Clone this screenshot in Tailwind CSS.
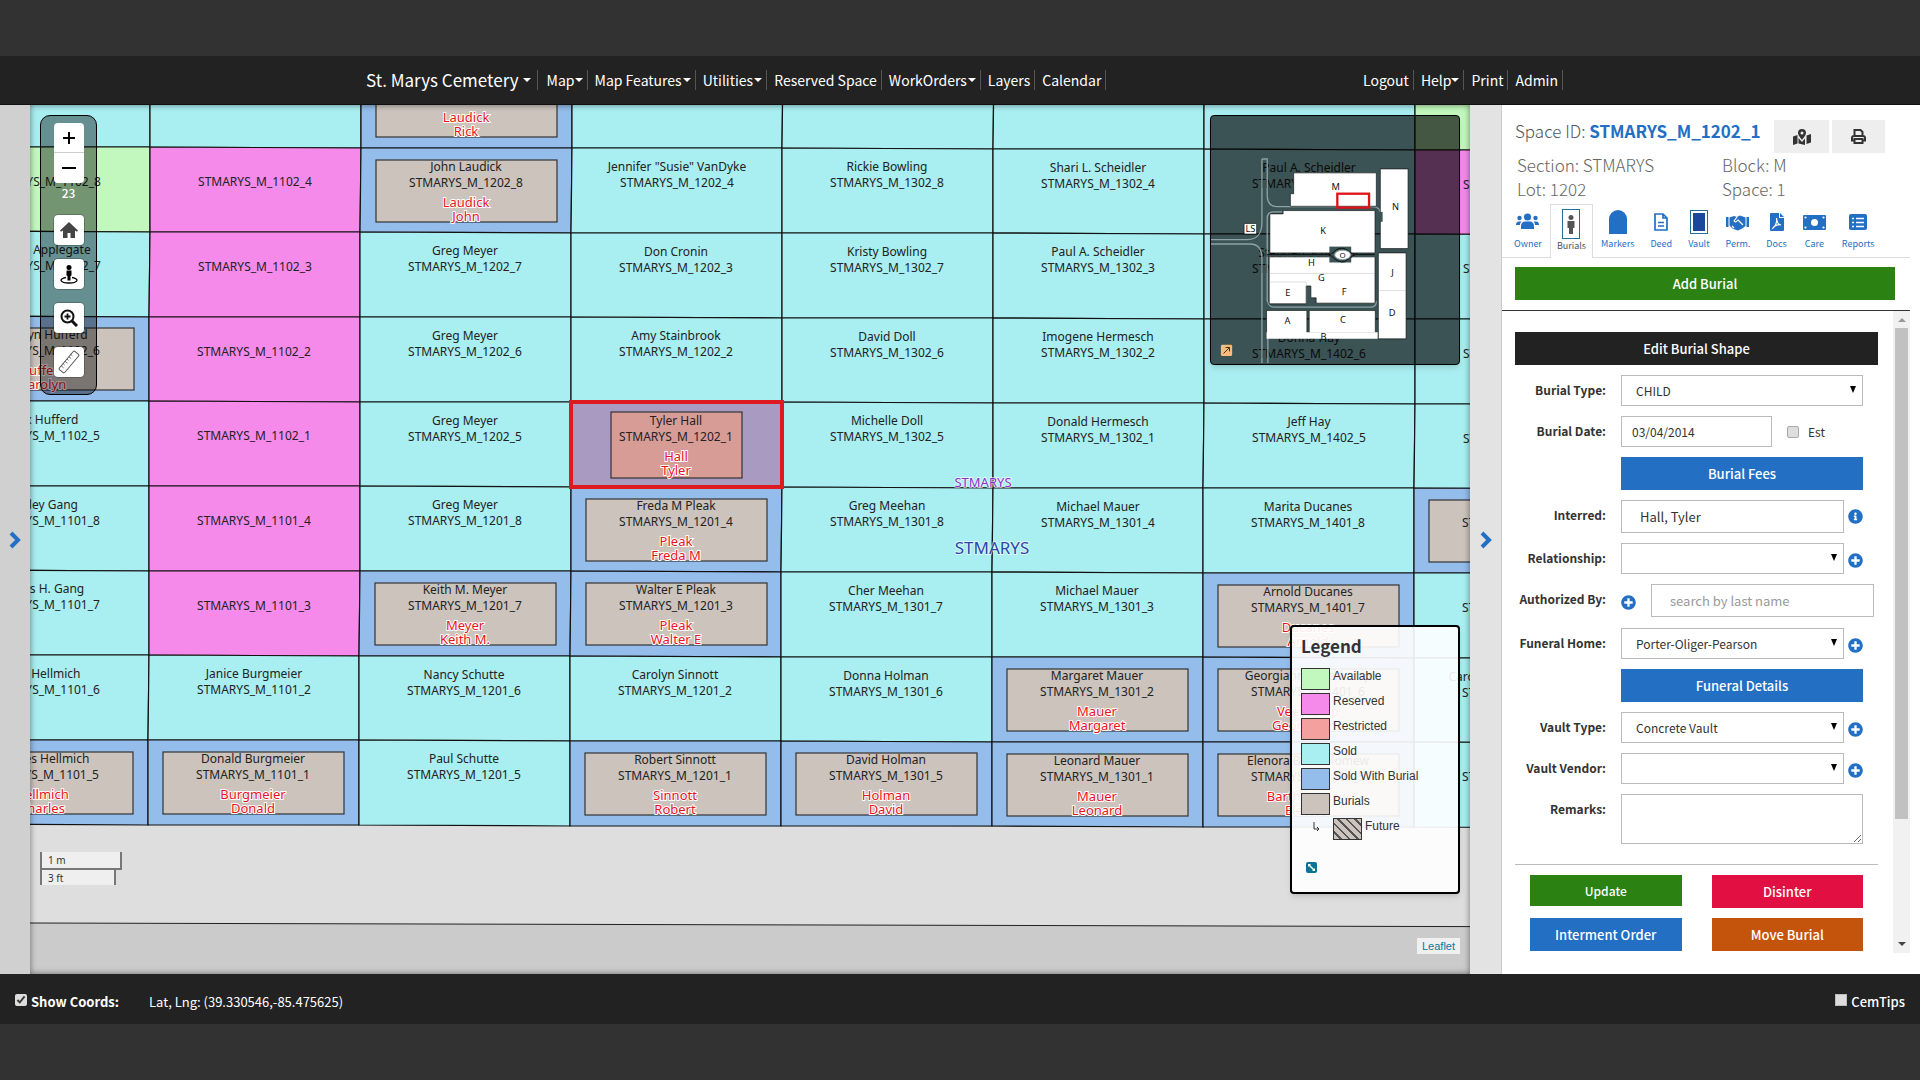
<!DOCTYPE html>
<html lang="en">
<head>
    <meta charset="UTF-8">
    <meta name="viewport" content="width=device-width, initial-scale=1.0">
    <title>St. Marys Cemetery</title>
    <script src="https://cdn.jsdelivr.net/npm/@tailwindcss/browser@4"></script>
</head>
<body class="bg-[#323232] min-h-screen flex flex-col py-14 font-['Noto_Sans_CJK_SC','Noto_Sans',sans-serif] text-[#333]">

<!-- Shared icons -->
<svg class="hidden">
    <symbol id="plus-circle" viewBox="0 0 512 512">
        <path d="M256 8C119 8 8 119 8 256s111 248 248 248 248-111 248-248S393 8 256 8zm144 276c0 7-5 12-12 12h-92v92c0 7-5 12-12 12h-56c-7 0-12-5-12-12v-92h-92c-7 0-12-5-12-12v-56c0-7 5-12 12-12h92v-92c0-7 5-12 12-12h56c7 0 12 5 12 12v92h92c7 0 12 5 12 12v56z"/>
    </symbol>
    <symbol id="info-circle" viewBox="0 0 512 512">
        <path d="M256 8C119 8 8 119 8 256c0 137 111 248 248 248s248-111 248-248C504 119 393 8 256 8zm0 110c23 0 42 19 42 42s-19 42-42 42-42-19-42-42 19-42 42-42zm56 254c0 7-5 12-12 12h-88c-7 0-12-5-12-12v-24c0-7 5-12 12-12h12v-64h-12c-7 0-12-5-12-12v-24c0-7 5-12 12-12h64c7 0 12 5 12 12v100h12c7 0 12 5 12 12v24z"/>
    </symbol>
    <symbol id="chevron" viewBox="0 0 14 18">
        <path d="M3 2l7 7-7 7" fill="none" stroke="currentColor" stroke-width="4"/>
    </symbol>
    <symbol id="caret" viewBox="0 0 8 4">
        <path d="M0 0h8L4 4z"/>
    </symbol>
    <symbol id="arrow" viewBox="0 0 6 7">
        <path d="M0 0h6L3 7z"/>
    </symbol>
</svg>

<header class="h-[49px] bg-[#222] text-white text-[14px] leading-5 flex items-center border-b border-[#111]">
    <nav class="w-full max-w-[1206px] mx-auto flex items-center justify-between pl-[9px]">
        <div class="flex items-center">
            <a href="#" class="flex items-center gap-1 border-r border-[#555] pr-[6px] mr-[9px] text-[17px]">St. Marys Cemetery
                <svg class="w-2 h-1 fill-current"><use href="#caret"/></svg></a>
            <a href="#" class="flex items-center border-r border-[#555] pr-1 mr-[7px]">Map
                <svg class="w-2 h-1 fill-current"><use href="#caret"/></svg></a>
            <a href="#" class="flex items-center gap-px border-r border-[#555] pr-1 mr-[7px]">Map Features
                <svg class="w-2 h-1 fill-current"><use href="#caret"/></svg></a>
            <a href="#" class="flex items-center gap-px border-r border-[#555] pr-1 mr-[7px]">Utilities
                <svg class="w-2 h-1 fill-current"><use href="#caret"/></svg></a>
            <a href="#" class="border-r border-[#555] pr-1 mr-[7px]">Reserved Space</a>
            <a href="#" class="flex items-center gap-px border-r border-[#555] pr-1 mr-[7px]">WorkOrders
                <svg class="w-2 h-1 fill-current"><use href="#caret"/></svg></a>
            <a href="#" class="border-r border-[#555] pr-1 mr-[7px]">Layers</a>
            <a href="#" class="border-r border-[#555] pr-1">Calendar</a>
        </div>
        <div class="flex items-center">
            <a href="#" class="border-r border-[#555] pr-1 mr-[7px]">Logout</a>
            <a href="#" class="flex items-center border-r border-[#555] pr-1 mr-[7px]">Help
                <svg class="w-2 h-1 fill-current"><use href="#caret"/></svg></a>
            <a href="#" class="border-r border-[#555] pr-1 mr-[7px]">Print</a>
            <a href="#" class="border-r border-[#555] pr-1">Admin</a>
        </div>
    </nav>
</header>

<main class="flex-1 flex">
    <button type="button" aria-label="Open left panel" class="w-[30px] shrink-0 bg-[#d0d0d0] flex items-center justify-center text-[#226fc4]">
        <svg class="w-[14px] h-[18px]"><use href="#chevron"/></svg>
    </button>

    <section class="flex-1 relative overflow-hidden bg-[#cbcbcb]">
        <svg id="map" class="absolute inset-0 size-full font-['Noto_Sans',sans-serif] text-[12px]"></svg>
        <div class="absolute inset-0 shadow-[inset_0_0_6px_rgba(0,0,0,0.5)]"></div>

        <!-- Map tools -->
        <div class="absolute left-[10px] top-[10px] w-[57px] h-[280px] rounded-[10px] border border-black bg-black/40 flex flex-col items-center pt-[7px]">
            <button type="button" class="w-[30px] h-[30px] rounded-t bg-white border-b border-[#ccc] flex items-center justify-center" aria-label="Zoom in">
                <svg class="w-3 h-3" viewBox="0 0 12 12" fill="none" stroke="#000" stroke-width="2"><path d="M6 0v12M0 6h12"/></svg>
            </button>
            <button type="button" class="w-[30px] h-[30px] rounded-b bg-white flex items-center justify-center" aria-label="Zoom out">
                <svg class="w-[14px] h-[2px]"><rect width="14" height="2"/></svg>
            </button>
            <span class="text-white font-medium text-[12px] leading-5 mb-3">23</span>
            <div class="flex flex-col gap-[14px]">
                <button type="button" class="size-[30px] rounded bg-white shadow-[0_0_0_1px_rgba(0,0,0,0.2)] flex items-center justify-center" aria-label="Home">
                    <svg class="w-[18px] h-4" viewBox="0 0 18 16" fill="#444"><path d="M9 0l9 8.5-1 1.2L15 8.500V16h-4.500v-5h-3v5H3V8.500L1 9.700 0 8.500z"/></svg>
                </button>
                <button type="button" class="size-[30px] rounded bg-white shadow-[0_0_0_1px_rgba(0,0,0,0.2)] flex items-center justify-center" aria-label="Street view">
                    <svg class="w-5 h-[19px]" viewBox="0 0 20 19"><circle cx="10" cy="2.5" r="2.5"/><path d="M7.500 5.500h5v5l-1 .5v4.500h-3V11l-1-.5z"/><path d="M7 12.500c-8 1.500-6 5.500 3 5.500s11-4 3-5.500" fill="none" stroke="#000" stroke-width="1.3"/></svg>
                </button>
                <button type="button" class="size-[30px] rounded bg-white shadow-[0_0_0_1px_rgba(0,0,0,0.2)] flex items-center justify-center" aria-label="Zoom to area">
                    <svg class="size-[18px]" viewBox="0 0 18 18" fill="none" stroke="#111"><circle cx="7.5" cy="7.5" r="6" stroke-width="2"/><path d="M7.500 4.500v6M4.500 7.500h6" stroke-width="1.8"/><path d="M12 12l5 5" stroke-width="3"/></svg>
                </button>
                <button type="button" class="size-[30px] rounded bg-white shadow-[0_0_0_1px_rgba(0,0,0,0.2)] flex items-center justify-center" aria-label="Measure">
                    <svg class="size-6" viewBox="0 0 24 24" fill="none" stroke="#555"><g transform="rotate(-50 12 12)"><rect x="0" y="8.5" width="24" height="7" rx="1.5"/><path d="M4 8.500v3M7 8.500v2M10 8.500v3M13 8.500v2M16 8.500v3M19 8.500v2" stroke-width=".8"/></g></svg>
                </button>
            </div>
        </div>

        <!-- Overview map -->
        <div class="absolute right-[10px] top-[10px] size-[250px] rounded border border-black bg-black/65 shadow-md">
            <svg class="size-full font-['Noto_Sans',sans-serif] text-[28px]" viewBox="0 0 750 750">
                <g fill="none" stroke="#8fa3a5" stroke-width="4">
                    <path d="M154 130v190c0 38-14 54-46 54H0M154 130h16v110c0 25 10 34 30 34h290c18 0 24 10 24 30M0 387h118c25 0 36 14 36 44v316M172 747V600"/>
                    <path d="M170 560V310c0-14 6-20 20-20h26M170 550c0 20 6 28 22 28h290c14 0 18-6 18-18"/>
                </g>
                <g fill="#fff" stroke="#111" stroke-width="2">
                    <path d="M250 172h250v101H240v-38h10z"/>
                    <path d="M512 160h84v241h-84z"/>
                    <path d="M178 296h40v-10h278v128H178z"/>
                    <path d="M176 426h320v140H318v-16h-16v-36h-14v54H176z"/>
                    <path d="M506 414h84v260h-84z"/>
                    <path d="M168 588h122v82H168zM297 588h200v68H297z"/>
                    <path d="M168 654h336v20H168z" stroke="none"/>
                </g>
                <path d="M176 476h320M176 502h112v66M506 528h84" fill="none" stroke="#999"/>
                <path d="M358 395h66v48h-66z" fill="#3b5355"/>
                <g stroke="#3b5355" fill="none">
                    <path d="M170 421h190c20 0 20-18 40-18s20 18 32 18h66M170 421h190c20 0 20 18 40 18s20-18 32-18" stroke-width="8"/>
                    <path d="M514 290v30" stroke-width="10"/>
                </g>
                <path d="M170 419h185c15 0 20-19 40-19s25 19 40 19h60M355 421c15 0 20 20 40 20s25-20 40-20" fill="none" stroke="#111" stroke-width="3"/>
                <ellipse cx="398" cy="420" rx="24" ry="14" fill="#fff" stroke="#8fa3a5" stroke-width="3"/>
                <rect x="100" y="325" width="38" height="32" rx="3" fill="#fff" stroke="#111" stroke-width="2"/>
                <rect x="382" y="235" width="96" height="42" fill="none" stroke="#e0121c" stroke-width="7"/>
                <g fill="#111" text-anchor="middle">
                    <text x="377" y="225">M</text>
                    <text x="558" y="285">N</text>
                    <text x="339" y="358">K</text>
                    <text x="119" y="351">LS</text>
                    <text x="304" y="454">H</text>
                    <text x="334" y="498">G</text>
                    <text x="232" y="545">E</text>
                    <text x="403" y="541">F</text>
                    <text x="549" y="484">J</text>
                    <text x="548" y="605">D</text>
                    <text x="231" y="628">A</text>
                    <text x="399" y="627">C</text>
                    <text x="340" y="676">B</text>
                    <text x="398" y="429" class="text-[24px]">O</text>
                </g>
                <rect x="30" y="692" width="34" height="34" rx="4" fill="#fdba7c"/>
                <path d="M38 718l18-18M44 700h12v12" fill="none" stroke="#333" stroke-width="3"/>
            </svg>
        </div>

        <!-- Legend -->
        <div class="absolute right-[10px] top-[520px] w-[170px] h-[269px] rounded border-2 border-black bg-white/90 shadow-md pl-[9px] pt-[9px] font-['Liberation_Sans',sans-serif] text-[12px] leading-4">
            <h2 class="font-['Noto_Sans_CJK_SC',sans-serif] font-bold text-[17px] leading-5 mb-3">Legend</h2>
            <ul class="space-y-[3px]">
                <li class="flex gap-[3px]"><span class="w-[29px] h-[22px] border border-[#333] bg-[#c2f8bd]"></span>Available</li>
                <li class="flex gap-[3px]"><span class="w-[29px] h-[22px] border border-[#333] bg-[#f58aeb]"></span>Reserved</li>
                <li class="flex gap-[3px]"><span class="w-[29px] h-[22px] border border-[#333] bg-[#f3a09e]"></span>Restricted</li>
                <li class="flex gap-[3px]"><span class="w-[29px] h-[22px] border border-[#333] bg-[#a9eef0]"></span>Sold</li>
                <li class="flex gap-[3px]"><span class="w-[29px] h-[22px] border border-[#333] bg-[#94bdec]"></span>Sold With Burial</li>
                <li class="flex gap-[3px]"><span class="w-[29px] h-[22px] border border-[#333] bg-[#cbc3bc]"></span>Burials</li>
                <li class="flex gap-[3px]">
                    <span class="w-[29px] flex justify-center pt-1"><svg class="size-[10px]" viewBox="0 0 10 10" fill="none" stroke="#333"><path d="M3 0v7h5M6 5l2 2-2 2"/></svg></span>
                    <span class="w-[29px] h-[22px] border border-[#333] bg-[repeating-linear-gradient(45deg,#cbc3bc_0_4px,#555_4px_6px)]"></span>Future
                </li>
            </ul>
            <button type="button" class="mt-[22px] ml-[5px] size-[11px] rounded-xs bg-[#0b7397] flex" aria-label="Collapse legend">
                <svg class="size-full" viewBox="0 0 11 11" fill="#fff"><path d="M2 2h3L4 3l4 4 1-1v3H6l1-1-4-4-1 1z"/></svg>
            </button>
        </div>

        <!-- Scale and attribution -->
        <div class="absolute left-[10px] top-[747px] font-['Noto_Sans',sans-serif] text-[10px] leading-4">
            <div class="w-[82px] border-2 border-t-0 border-[#777] bg-white/50 px-[6px]">1 m</div>
            <div class="w-[76px] h-[15px] border-x-2 border-[#777] bg-white/50 px-[6px]">3 ft</div>
        </div>
        <a href="#" class="absolute right-[10px] bottom-5 bg-white/70 px-[5px] font-['Liberation_Sans',sans-serif] text-[11px] leading-4 text-[#0078a8]">Leaflet</a>
    </section>

    <button type="button" aria-label="Close right panel" class="w-8 shrink-0 bg-[#e3e3e3] border-r border-[#ccc] flex items-center justify-center text-[#226fc4]">
        <svg class="w-[14px] h-[18px]"><use href="#chevron"/></svg>
    </button>

    <aside class="w-[418px] shrink-0 bg-white flex flex-col">
        <div class="flex justify-between pl-[13px] pr-[35px] pt-[15px]">
            <h1 class="text-[17px] leading-[22px] font-light text-[#555]">Space ID: <b class="font-bold text-[#226fc4]">STMARYS_M_1202_1</b></h1>
            <div class="flex gap-[3px]">
                <button type="button" class="w-[55px] h-[33px] bg-[#eee] flex items-center justify-center" aria-label="Show on map">
                    <svg class="w-[18px] h-4" viewBox="0 0 18 16" fill="#333"><path d="M9 0a4 4 0 0 0-4 4c0 2 3 5.500 4 7 1-1.500 4-5 4-7a4 4 0 0 0-4-4zm0 5.500A1.500 1.500 0 1 1 9 2.500a1.500 1.500 0 0 1 0 3zM0 7.500L4.500 6v8.500L0 16zM5.500 9l3.500 4 3-3.500V16l-6.500-1.500zM13.500 6.500L18 5v8.500L13.500 15z"/></svg>
                </button>
                <button type="button" class="w-[53px] h-[33px] bg-[#eee] flex items-center justify-center" aria-label="Print">
                    <svg class="size-[15px]" viewBox="0 0 15 15" fill="none" stroke="#333" stroke-width="2"><path d="M3.500 7V1h6l2 2v4M3.500 11.500H1V9a2 2 0 0 1 2-2h9a2 2 0 0 1 2 2v2.500h-2.500M3.500 10h8v4h-8z"/></svg>
                </button>
            </div>
        </div>
        <div class="grid grid-cols-[205px_1fr] pl-[15px] text-[17px] leading-6 font-light text-[#666]">
            <span>Section: STMARYS</span><span>Block: M</span>
            <span>Lot: 1202</span><span>Space: 1</span>
        </div>

        <nav class="flex mt-[3px] mr-[10px] pl-1 h-[54px] border-b border-[#ddd] text-[9px] leading-2 text-[#226fc4]">
            <a href="#" class="flex flex-col items-center px-2">
                <svg class="w-[23px] h-9" viewBox="0 0 23 36" fill="currentColor"><circle cx="11.5" cy="13" r="3.6"/><path d="M5 25v-3c0-3 2-4.500 4-4.500h5c2 0 4 1.500 4 4.500v3z"/><circle cx="3.5" cy="14" r="2.2"/><circle cx="19.5" cy="14" r="2.2"/><path d="M0 21c0-2 1-3.500 3-3.500h2.500C4 19 4 20 4 21zM23 21c0-2-1-3.500-3-3.500h-2.500C19 19 19 20 19 21z"/></svg>Owner</a>
            <a href="#" class="flex flex-col items-center px-[6px] h-[54px] border border-b-0 border-[#ddd] bg-white text-[#555] pt-1 leading-[14px]">
                <svg class="w-[18px] h-[30px]" viewBox="0 0 18 30"><rect x=".5" y=".5" width="17" height="29" fill="none" stroke="#226f9f"/><circle cx="9" cy="8.5" r="2.5" fill="#555"/><path d="M5.500 12h7v7H11v6H7v-6H5.500z" fill="#555"/></svg>Burials</a>
            <a href="#" class="flex flex-col items-center px-2">
                <svg class="w-[18px] h-9" viewBox="0 0 18 36" fill="currentColor"><path d="M0 30V15a9 9 0 0 1 18 0v15z"/></svg>Markers</a>
            <a href="#" class="flex flex-col items-center px-2">
                <svg class="w-[14px] h-9" viewBox="0 0 14 36" fill="none" stroke="currentColor" stroke-width="2"><path d="M1 10h8l4 4v12H1zM9 10v4h4M4 18.500h6M4 22h6" stroke-width="1.7"/></svg>Deed</a>
            <a href="#" class="flex flex-col items-center px-2">
                <svg class="w-[18px] h-9" viewBox="0 0 18 36"><rect x=".5" y="6.5" width="17" height="23" fill="none" stroke="#226f9f"/><rect x="3" y="9" width="12" height="18" fill="#1b479d"/></svg>Vault</a>
            <a href="#" class="flex flex-col items-center px-2">
                <svg class="w-[23px] h-9" viewBox="0 0 23 36" fill="currentColor"><path d="M0 13h2.500v10H0zM20.500 13H23v10h-2.500z"/><path d="M3.500 13.500L8 12l3 1 3-1.500 5.500 2V22l-4 3-4 1.500-5-2-3-3z"/><path d="M11 13l-3 4c1 1.500 2.500 1 4-1l5 5M6 22l2 2" fill="none" stroke="#fff" stroke-width="1.2"/></svg>Perm.</a>
            <a href="#" class="flex flex-col items-center px-2">
                <svg class="w-[14px] h-9" viewBox="0 0 14 36"><path d="M0 10q0-1 1-1h8v5h5v12q0 1-1 1H1q-1 0-1-1z" fill="currentColor"/><path d="M10 9l4 4h-4z" fill="currentColor"/><path d="M6.500 14c1 5-2 9-3.500 10 1-2 5-4 8-3-2 0-4-2-4.500-7z" fill="none" stroke="#fff" stroke-width="1.2"/></svg>Docs</a>
            <a href="#" class="flex flex-col items-center px-2">
                <svg class="w-[23px] h-9" viewBox="0 0 23 36"><rect y="11" width="23" height="15" rx="1" fill="currentColor"/><circle cx="11.5" cy="18.5" r="3.5" fill="#fff"/><g fill="#fff"><circle cx="2.5" cy="13.5" r="1.1"/><circle cx="20.5" cy="13.5" r="1.1"/><circle cx="2.5" cy="23.5" r="1.1"/><circle cx="20.5" cy="23.5" r="1.1"/></g></svg>Care</a>
            <a href="#" class="flex flex-col items-center px-2">
                <svg class="w-[18px] h-9" viewBox="0 0 18 36"><rect y="10" width="18" height="16" rx="2" fill="currentColor"/><path d="M3 14.500h2M7 14.500h8M3 18.500h2M7 18.500h8M3 22.500h2M7 22.500h8" stroke="#fff" stroke-width="1.7"/></svg>Reports</a>
        </nav>

        <div class="pl-[13px] pr-[25px] pt-[9px] pb-[10px]">
            <button type="button" class="w-full h-[33px] bg-[#2b8212] text-white font-medium text-[13px]">Add Burial</button>
        </div>

        <div class="flex mr-[10px] border-t border-[#333] h-[643px]">
            <form class="flex-1 pl-[13px] pr-[15px] pt-[21px] text-[13px]">
                <h2 class="h-[33px] bg-[#222] text-white font-medium text-[13px] leading-[33px] text-center">Edit Burial Shape</h2>
                <div class="grid grid-cols-[91px_1fr] gap-x-[15px] gap-y-[10px] pt-[10px] pr-[15px]">
                    <label for="type" class="text-right font-bold text-[12px] leading-[30px]">Burial Type:</label>
                    <div class="relative">
                        <select id="type" class="appearance-none block w-full h-[31px] border border-[#bbb] pl-[14px] text-[12px]"><option>CHILD</option></select>
                        <svg class="absolute right-[7px] top-[11px] w-[6px] h-[7px] pointer-events-none"><use href="#arrow"/></svg>
                    </div>

                    <label for="date" class="text-right font-bold text-[12px] leading-[30px]">Burial Date:</label>
                    <div class="flex items-center">
                        <input id="date" type="text" value="03/04/2014" class="w-[151px] h-[31px] border border-[#bbb] px-[10px] text-[12px]">
                        <input id="est" type="checkbox" class="appearance-none size-3 rounded-xs border border-[#aaa] bg-[#ddd] ml-[15px] mr-[9px]">
                        <label for="est" class="text-[12px]">Est</label>
                    </div>

                    <button type="button" class="col-start-2 h-[33px] bg-[#226fc4] text-white font-medium text-[13px]">Burial Fees</button>

                    <label for="interred" class="text-right font-bold text-[12px] leading-[30px]">Interred:</label>
                    <div class="flex items-center justify-between">
                        <input id="interred" type="text" value="Hall, Tyler" class="w-[223px] h-[33px] border border-[#bbb] px-[18px] text-[13px]">
                        <button type="button" aria-label="Interred details"><svg class="size-[15px] fill-[#226fc4]"><use href="#info-circle"/></svg></button>
                    </div>

                    <label for="relationship" class="text-right font-bold text-[12px] leading-[30px]">Relationship:</label>
                    <div class="flex items-center justify-between">
                        <div class="relative w-[223px]">
                            <select id="relationship" class="appearance-none block w-full h-[31px] border border-[#bbb] pl-[14px] text-[12px]"><option></option></select>
                            <svg class="absolute right-[7px] top-[11px] w-[6px] h-[7px] pointer-events-none"><use href="#arrow"/></svg>
                        </div>
                        <button type="button" class="mt-1" aria-label="Add relationship"><svg class="size-[15px] fill-[#226fc4]"><use href="#plus-circle"/></svg></button>
                    </div>

                    <label for="authorized" class="text-right font-bold text-[12px] leading-[30px]">Authorized By:</label>
                    <div class="flex h-[34px] -mr-[11px]">
                        <button type="button" class="mt-[3px] mr-[15px]" aria-label="Add authorization"><svg class="size-[15px] fill-[#226fc4]"><use href="#plus-circle"/></svg></button>
                        <input id="authorized" type="text" placeholder="search by last name" class="w-[223px] h-[33px] border border-[#bbb] px-[18px] text-[13px] placeholder:text-[#999]">
                    </div>

                    <label for="home" class="text-right font-bold text-[12px] leading-[30px]">Funeral Home:</label>
                    <div class="flex items-center justify-between">
                        <div class="relative w-[223px]">
                            <select id="home" class="appearance-none block w-full h-[31px] border border-[#bbb] pl-[14px] text-[12px]"><option>Porter-Oliger-Pearson</option></select>
                            <svg class="absolute right-[7px] top-[11px] w-[6px] h-[7px] pointer-events-none"><use href="#arrow"/></svg>
                        </div>
                        <button type="button" class="mt-1" aria-label="Add funeral home"><svg class="size-[15px] fill-[#226fc4]"><use href="#plus-circle"/></svg></button>
                    </div>

                    <button type="button" class="col-start-2 h-[33px] bg-[#226fc4] text-white font-medium text-[13px]">Funeral Details</button>

                    <label for="vault" class="text-right font-bold text-[12px] leading-[30px]">Vault Type:</label>
                    <div class="flex items-center justify-between">
                        <div class="relative w-[223px]">
                            <select id="vault" class="appearance-none block w-full h-[31px] border border-[#bbb] pl-[14px] text-[12px]"><option>Concrete Vault</option></select>
                            <svg class="absolute right-[7px] top-[11px] w-[6px] h-[7px] pointer-events-none"><use href="#arrow"/></svg>
                        </div>
                        <button type="button" class="mt-1" aria-label="Add vault type"><svg class="size-[15px] fill-[#226fc4]"><use href="#plus-circle"/></svg></button>
                    </div>

                    <label for="vendor" class="text-right font-bold text-[12px] leading-[30px]">Vault Vendor:</label>
                    <div class="flex items-center justify-between">
                        <div class="relative w-[223px]">
                            <select id="vendor" class="appearance-none block w-full h-[31px] border border-[#bbb] pl-[14px] text-[12px]"><option></option></select>
                            <svg class="absolute right-[7px] top-[11px] w-[6px] h-[7px] pointer-events-none"><use href="#arrow"/></svg>
                        </div>
                        <button type="button" class="mt-1" aria-label="Add vault vendor"><svg class="size-[15px] fill-[#226fc4]"><use href="#plus-circle"/></svg></button>
                    </div>

                    <label for="remarks" class="text-right font-bold text-[12px] leading-[30px]">Remarks:</label>
                    <textarea id="remarks" class="block w-full h-[50px] border border-[#bbb]"></textarea>
                </div>

                <div class="grid grid-cols-2 gap-x-[30px] gap-y-[10px] items-start mt-5 pt-[10px] px-[15px] border-t border-[#bbb] text-white font-medium text-[13px]">
                    <button type="submit" class="h-[31px] bg-[#2b8212] text-[12px]">Update</button>
                    <button type="button" class="h-[33px] bg-[#e20f42]">Disinter</button>
                    <button type="button" class="h-[33px] bg-[#226fc4]">Interment Order</button>
                    <button type="button" class="h-[33px] bg-[#c4530b]">Move Burial</button>
                </div>
            </form>
            <!-- Scroll bar -->
            <div class="w-[17px] bg-[#f1f1f1] flex flex-col items-center">
                <svg class="w-2 h-[17px]" viewBox="0 0 8 17" fill="#999"><path d="M0 11h8L4 7z"/></svg>
                <div class="w-[13px] h-[491px] bg-[#c1c1c1]"></div>
                <svg class="w-2 h-[17px] mt-auto" viewBox="0 0 8 17" fill="#444"><path d="M0 6h8l-4 4z"/></svg>
            </div>
        </div>
    </aside>
</main>

<footer class="h-[50px] bg-[#222] text-white text-[13px] leading-5 flex items-center px-[15px] pt-[6px]">
    <input id="coords" type="checkbox" checked class="size-3 mr-1 -mt-1 accent-[#ddd]">
    <label for="coords" class="font-bold mr-[30px]">Show Coords:</label>
    <span>Lat, Lng: (39.330546,-85.475625)</span>
    <input id="tips" type="checkbox" class="appearance-none size-3 bg-[#ddd] border border-[#bbb] ml-auto mr-1 -mt-1">
    <label for="tips" class="font-medium">CemTips</label>
</footer>

<script>
    const fills = {
        available: '#c2f8bd',
        reserved: '#f58aeb',
        sold: '#a9eef0',
        burial: '#94bdec',
        selected: '#a99ac2'
    };

    // [status, owner, space id, burial last name, burial first name], one list per column
    const columns = [
        [
            ['sold'],
            ['available', '', 'STMARYS_M_1102_8'],
            ['sold', 'Diane Applegate', 'STMARYS_M_1102_7'],
            ['burial', 'Carolyn Hufferd', 'STMARYS_M_1102_6', 'Hufferd', 'Carolyn'],
            ['sold', 'Max Hufferd', 'STMARYS_M_1102_5'],
            ['sold', 'Ashley Gang', 'STMARYS_M_1101_8'],
            ['sold', 'James H. Gang', 'STMARYS_M_1101_7'],
            ['sold', 'Ann Hellmich', 'STMARYS_M_1101_6'],
            ['burial', 'Charles Hellmich', 'STMARYS_M_1101_5', 'Hellmich', 'Charles']
        ],
        [
            ['sold'],
            ['reserved', '', 'STMARYS_M_1102_4'],
            ['reserved', '', 'STMARYS_M_1102_3'],
            ['reserved', '', 'STMARYS_M_1102_2'],
            ['reserved', '', 'STMARYS_M_1102_1'],
            ['reserved', '', 'STMARYS_M_1101_4'],
            ['reserved', '', 'STMARYS_M_1101_3'],
            ['sold', 'Janice Burgmeier', 'STMARYS_M_1101_2'],
            ['burial', 'Donald Burgmeier', 'STMARYS_M_1101_1', 'Burgmeier', 'Donald']
        ],
        [
            ['burial', '', '', 'Laudick', 'Rick'],
            ['burial', 'John Laudick', 'STMARYS_M_1202_8', 'Laudick', 'John'],
            ['sold', 'Greg Meyer', 'STMARYS_M_1202_7'],
            ['sold', 'Greg Meyer', 'STMARYS_M_1202_6'],
            ['sold', 'Greg Meyer', 'STMARYS_M_1202_5'],
            ['sold', 'Greg Meyer', 'STMARYS_M_1201_8'],
            ['burial', 'Keith M. Meyer', 'STMARYS_M_1201_7', 'Meyer', 'Keith M.'],
            ['sold', 'Nancy Schutte', 'STMARYS_M_1201_6'],
            ['sold', 'Paul Schutte', 'STMARYS_M_1201_5']
        ],
        [
            ['sold'],
            ['sold', 'Jennifer "Susie" VanDyke', 'STMARYS_M_1202_4'],
            ['sold', 'Don Cronin', 'STMARYS_M_1202_3'],
            ['sold', 'Amy Stainbrook', 'STMARYS_M_1202_2'],
            ['selected', 'Tyler Hall', 'STMARYS_M_1202_1', 'Hall', 'Tyler'],
            ['burial', 'Freda M Pleak', 'STMARYS_M_1201_4', 'Pleak', 'Freda M'],
            ['burial', 'Walter E Pleak', 'STMARYS_M_1201_3', 'Pleak', 'Walter E'],
            ['sold', 'Carolyn Sinnott', 'STMARYS_M_1201_2'],
            ['burial', 'Robert Sinnott', 'STMARYS_M_1201_1', 'Sinnott', 'Robert']
        ],
        [
            ['sold'],
            ['sold', 'Rickie Bowling', 'STMARYS_M_1302_8'],
            ['sold', 'Kristy Bowling', 'STMARYS_M_1302_7'],
            ['sold', 'David Doll', 'STMARYS_M_1302_6'],
            ['sold', 'Michelle Doll', 'STMARYS_M_1302_5'],
            ['sold', 'Greg Meehan', 'STMARYS_M_1301_8'],
            ['sold', 'Cher Meehan', 'STMARYS_M_1301_7'],
            ['sold', 'Donna Holman', 'STMARYS_M_1301_6'],
            ['burial', 'David Holman', 'STMARYS_M_1301_5', 'Holman', 'David']
        ],
        [
            ['sold'],
            ['sold', 'Shari L. Scheidler', 'STMARYS_M_1302_4'],
            ['sold', 'Paul A. Scheidler', 'STMARYS_M_1302_3'],
            ['sold', 'Imogene Hermesch', 'STMARYS_M_1302_2'],
            ['sold', 'Donald Hermesch', 'STMARYS_M_1302_1'],
            ['sold', 'Michael Mauer', 'STMARYS_M_1301_4'],
            ['sold', 'Michael Mauer', 'STMARYS_M_1301_3'],
            ['burial', 'Margaret Mauer', 'STMARYS_M_1301_2', 'Mauer', 'Margaret'],
            ['burial', 'Leonard Mauer', 'STMARYS_M_1301_1', 'Mauer', 'Leonard']
        ],
        [
            ['sold'],
            ['sold', 'Paul A. Scheidler', 'STMARYS_M_1402_8'],
            ['sold', 'Stephen Scheidler', 'STMARYS_M_1402_7'],
            ['sold', 'Donna Hay', 'STMARYS_M_1402_6'],
            ['sold', 'Jeff Hay', 'STMARYS_M_1402_5'],
            ['sold', 'Marita Ducanes', 'STMARYS_M_1401_8'],
            ['burial', 'Arnold Ducanes', 'STMARYS_M_1401_7', 'Ducanes', 'Arnold'],
            ['burial', 'Georgianna Veerkamp', 'STMARYS_M_1401_6', 'Veerkamp', 'Georgianna'],
            ['burial', 'Elenora Bartholomew', 'STMARYS_M_1401_5', 'Bartholomew', 'Elenora']
        ],
        [
            ['available'],
            ['reserved', '', 'STMARYS_M_1402_4'],
            ['sold', '', 'STMARYS_M_1402_3'],
            ['sold', '', 'STMARYS_M_1402_2'],
            ['sold', '', 'STMARYS_M_1402_1'],
            ['burial', '', 'STMARYS_M_1401_4'],
            ['sold', '', 'STMARYS_M_1401_3'],
            ['sold', 'Carolyn R. Hoffmann-Ray', 'STMARYS_M_1401_2'],
            ['sold', '', 'STMARYS_M_1401_1']
        ]
    ];

    // The survey is turned slightly, so each corner is worked out on its own
    const cornerX = (c, r) => Math.round(-91 + 210.9 * c - 0.2 * r);
    const cornerY = (c, r) => Math.round(-43 + 84.7 * r + 0.4 * c);

    function label(x, y, text, cls) {
        return text ? `<text x="${x}" y="${y}" text-anchor="middle" class="${cls}">${text}</text>` : '';
    }

    let shapes = '<path d="M-5 719L1600 722V822L-5 818Z" fill="#dedede" stroke="#222"/>';
    let labels = '';
    let outline = '';

    columns.forEach((column, c) => {
        column.forEach(([status, owner, id, last, first], r) => {
            const x = cornerX(c, r);
            const y = cornerY(c, r);
            const points = [[c, r], [c + 1, r], [c + 1, r + 1], [c, r + 1]]
                .map(([i, j]) => cornerX(i, j) + ',' + cornerY(i, j)).join(' ');
            shapes += `<polygon points="${points}" fill="${fills[status]}" stroke="#111" stroke-width="1.2"/>`;

            if (status === 'burial') {
                shapes += `<rect x="${x + 15}" y="${y + 12}" width="181" height="62" fill="#cbc3bc" stroke="#333" stroke-width="1.2"/>`;
            }
            if (status === 'selected') {
                shapes += `<rect x="${x + 40}" y="${y + 10}" width="131" height="66" fill="#d79c96" stroke="#333" stroke-width="1.2"/>`;
                outline = `<polygon points="${points}" fill="none" stroke="#dc1a20" stroke-width="4"/>`;
            }

            const mid = x + 105;
            labels += label(mid, y + 23, owner, 'fill-[#222]');
            labels += label(mid, y + 39, id, 'fill-[#222]');
            labels += label(mid, y + 59, last, 'text-[13px] fill-[#e8141c] stroke-white stroke-2 [paint-order:stroke]');
            labels += label(mid, y + 73, first, 'text-[13px] fill-[#e8141c] stroke-white stroke-2 [paint-order:stroke]');
        });
    });

    labels += label(953, 382, 'STMARYS', 'text-[13px] fill-[#9030c8] stroke-white/60 stroke-2 [paint-order:stroke]');
    labels += label(962, 449, 'STMARYS', 'text-[17px] fill-[#2a48a8] stroke-white/60 stroke-2 [paint-order:stroke]');

    document.getElementById('map').innerHTML = shapes + outline + labels;
</script>
</body>
</html>
